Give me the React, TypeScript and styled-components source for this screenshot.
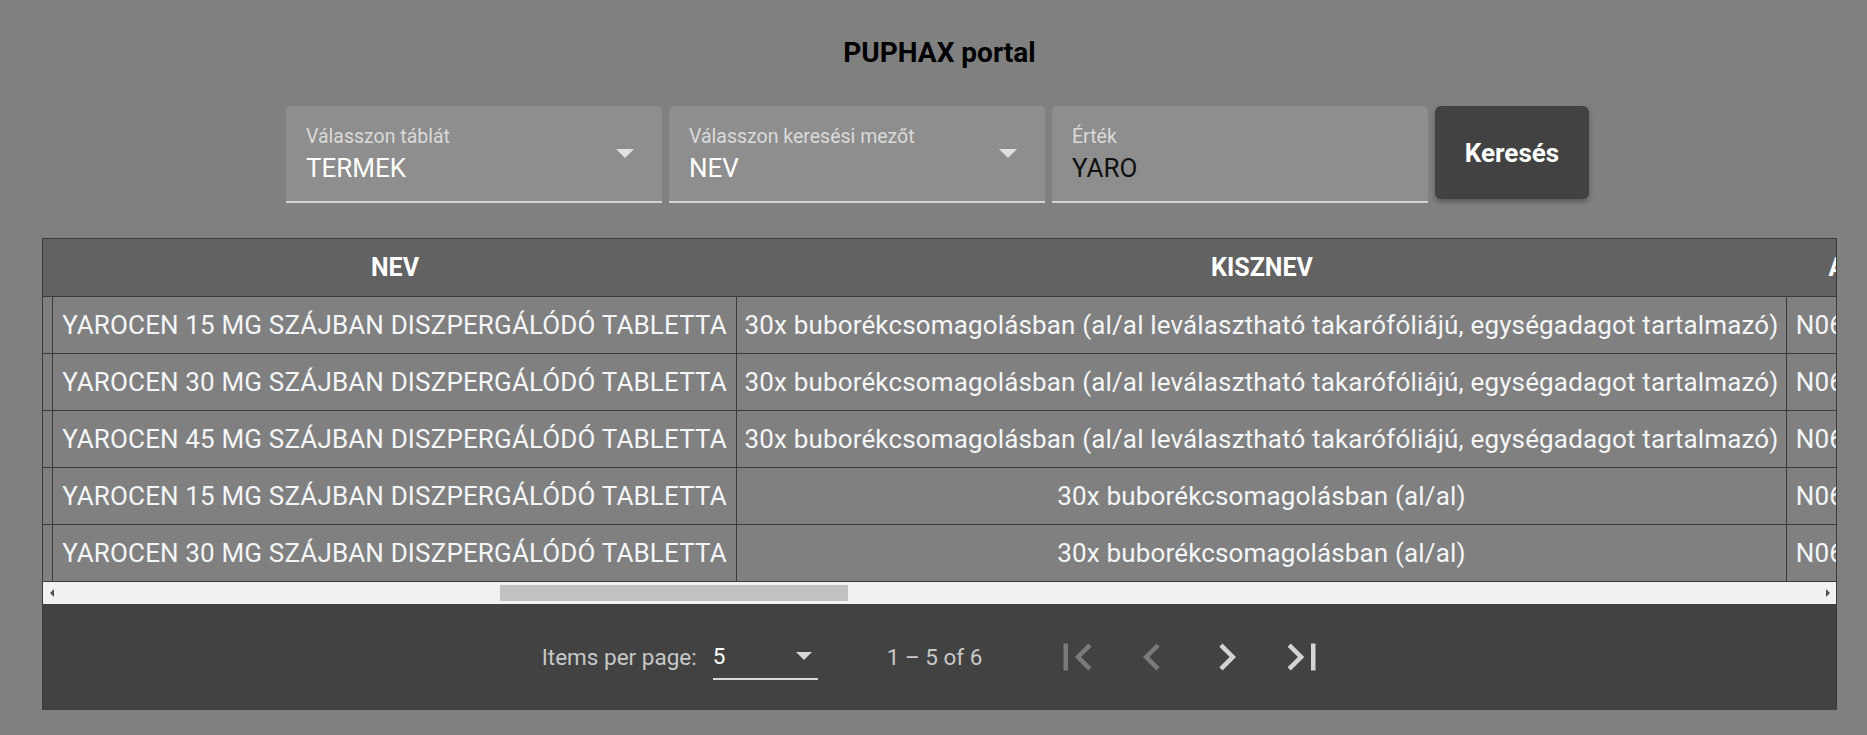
import React from "react";
import styled, { createGlobalStyle } from "styled-components";

const GlobalStyle = createGlobalStyle`
  html, body {
    margin: 0;
    padding: 0;
    background: #808080;
  }
  body {
    font-family: Roboto, "Noto Sans", "Liberation Sans", sans-serif;
  }
  * { box-sizing: border-box; }
`;

const Page = styled.div`
  width: 1795px;
  margin-left: 42px;
  min-height: 735px;
  display: flex;
  flex-direction: column;
  align-items: center;
`;

const Title = styled.h1`
  margin: 36px 0 0;
  font-size: 28px;
  line-height: 34px;
  font-weight: 700;
  color: #000;
`;

const SearchRow = styled.div`
  display: flex;
  gap: 7px;
  margin: 36px 4px 0 0;
  align-items: flex-start;
`;

const Field = styled.div`
  width: 376px;
  height: 97px;
  background: #8e8e8e;
  border-radius: 5px 5px 0 0;
  border-bottom: 2px solid #d2d2d2;
  padding: 19px 20px 0;
  display: grid;
  grid-template-columns: 1fr auto;
  align-items: start;
`;

const FieldText = styled.div`
  display: flex;
  flex-direction: column;
`;

const FieldLabel = styled.span`
  font-size: 19.5px;
  line-height: 23px;
  color: #dadada;
`;

const FieldValue = styled.span<{ $dark?: boolean }>`
  margin-top: 5px;
  font-size: 26px;
  line-height: 30px;
  color: ${(p) => (p.$dark ? "#111" : "#fff")};
`;

const SelectArrow = styled.span`
  align-self: center;
  margin: 0 8px 20px 0;
  width: 0;
  height: 0;
  border-left: 9px solid transparent;
  border-right: 9px solid transparent;
  border-top: 9px solid #e0e0e0;
`;

const SearchButton = styled.button`
  width: 154px;
  height: 93px;
  border: 0;
  border-radius: 6px;
  background: #424242;
  color: #fff;
  font-family: inherit;
  font-size: 26px;
  font-weight: 700;
  box-shadow: 0 3px 5px rgba(0, 0, 0, 0.3);
`;

const TableCard = styled.section`
  width: 100%;
  margin-top: 35px;
  border: 1px solid #3a3a3a;
  border-bottom: 0;
  display: flex;
  flex-direction: column;
`;

const Viewport = styled.div`
  overflow: hidden;
`;

const Grid = styled.div`
  display: grid;
  grid-template-columns: 10px 684px 1050px 130px;
  grid-template-rows: 58px repeat(5, 57px);
  width: 1874px;
`;

const HeadCell = styled.div`
  background: #626262;
  border-bottom: 1px solid #3a3a3a;
  color: #fff;
  font-size: 25px;
  font-weight: 700;
  display: flex;
  align-items: center;
  justify-content: center;
  white-space: nowrap;
  overflow: hidden;
  min-width: 0;
`;

const Cell = styled.div<{ $edge?: boolean }>`
  border-right: 1px solid #3a3a3a;
  border-bottom: 1px solid #3a3a3a;
  color: #f4f6f8;
  font-size: 26px;
  letter-spacing: 0.15px;
  display: flex;
  align-items: center;
  justify-content: center;
  padding: ${(p) => (p.$edge ? "0" : "0 8px")};
  white-space: nowrap;
  overflow: hidden;
  min-width: 0;
`;

const ScrollBar = styled.div`
  height: 22px;
  background: #f1f1f1;
  display: flex;
  align-items: center;
`;

const ScrollArrow = styled.span<{ $dir: "left" | "right" }>`
  width: 17px;
  height: 22px;
  display: flex;
  align-items: center;
  justify-content: center;
  &::before {
    content: "";
    width: 0;
    height: 0;
    border-top: 4px solid transparent;
    border-bottom: 4px solid transparent;
    ${(p) =>
      p.$dir === "left"
        ? "border-right: 4px solid #505050;"
        : "border-left: 4px solid #505050;"}
  }
`;

const ScrollTrack = styled.div`
  flex: 1;
  height: 100%;
  display: flex;
  align-items: center;
`;

const ScrollThumb = styled.div`
  height: 16px;
  background: #c1c1c1;
`;

const Paginator = styled.div`
  height: 106px;
  background: #424242;
  display: flex;
  align-items: center;
  justify-content: center;
  padding-left: 2px;
`;

const PagLabel = styled.span`
  font-size: 22.5px;
  color: #c8c8c8;
  margin-right: 16px;
`;

const PageSizeSelect = styled.div`
  width: 105px;
  height: 46px;
  border-bottom: 2px solid #d8d8d8;
  display: flex;
  align-items: center;
  justify-content: space-between;
  padding-right: 6px;
  font-size: 22.5px;
  color: #fff;
`;

const SmallArrow = styled.span`
  width: 0;
  height: 0;
  border-left: 8px solid transparent;
  border-right: 8px solid transparent;
  border-top: 8px solid #d8d8d8;
`;

const RangeLabel = styled.span`
  font-size: 22.5px;
  color: #c8c8c8;
  margin: 0 57px 0 69px;
`;

const NavButton = styled.button<{ $disabled?: boolean }>`
  width: 75px;
  height: 60px;
  border: 0;
  background: transparent;
  padding: 0;
  display: flex;
  align-items: center;
  justify-content: center;
  color: ${(p) => (p.$disabled ? "#7a7a7a" : "#d4d4d4")};
`;

const NavIcon = ({ d }: { d: string }) => (
  <svg width="54" height="54" viewBox="0 0 24 24" fill="currentColor">
    <path d={d} />
  </svg>
);

const ICONS = {
  first: "M18.41 16.59L13.82 12l4.59-4.59L17 6l-6 6 6 6zM6 6h2v12H6z",
  prev: "M15.41 7.41L14 6l-6 6 6 6 1.41-1.41L10.83 12z",
  next: "M10 6L8.59 7.41 13.17 12l-4.58 4.59L10 18l6-6z",
  last: "M5.59 7.41L10.18 12l-4.59 4.59L7 18l6-6-6-6zM16 6h2v12h-2z",
};

const LONG = "30x buborékcsomagolásban (al/al leválasztható takarófóliájú, egységadagot tartalmazó)";
const SHORT = "30x buborékcsomagolásban (al/al)";

const rows = [
  { nev: "YAROCEN 15 MG SZÁJBAN DISZPERGÁLÓDÓ TABLETTA", kisz: LONG, atc: "N06AX11" },
  { nev: "YAROCEN 30 MG SZÁJBAN DISZPERGÁLÓDÓ TABLETTA", kisz: LONG, atc: "N06AX11" },
  { nev: "YAROCEN 45 MG SZÁJBAN DISZPERGÁLÓDÓ TABLETTA", kisz: LONG, atc: "N06AX11" },
  { nev: "YAROCEN 15 MG SZÁJBAN DISZPERGÁLÓDÓ TABLETTA", kisz: SHORT, atc: "N06AX11" },
  { nev: "YAROCEN 30 MG SZÁJBAN DISZPERGÁLÓDÓ TABLETTA", kisz: SHORT, atc: "N06AX11" },
];

export default function App() {
  return (
    <>
      <GlobalStyle />
      <Page>
        <Title>PUPHAX portal</Title>
        <SearchRow>
          <Field>
            <FieldText>
              <FieldLabel>Válasszon táblát</FieldLabel>
              <FieldValue>TERMEK</FieldValue>
            </FieldText>
            <SelectArrow />
          </Field>
          <Field>
            <FieldText>
              <FieldLabel>Válasszon keresési mezőt</FieldLabel>
              <FieldValue>NEV</FieldValue>
            </FieldText>
            <SelectArrow />
          </Field>
          <Field>
            <FieldText>
              <FieldLabel>Érték</FieldLabel>
              <FieldValue $dark>YARO</FieldValue>
            </FieldText>
          </Field>
          <SearchButton>Keresés</SearchButton>
        </SearchRow>

        <TableCard>
          <Viewport>
            <Grid>
              <HeadCell />
              <HeadCell>NEV</HeadCell>
              <HeadCell>KISZNEV</HeadCell>
              <HeadCell>ATC</HeadCell>
              {rows.map((r, i) => (
                <React.Fragment key={i}>
                  <Cell $edge />
                  <Cell>{r.nev}</Cell>
                  <Cell>{r.kisz}</Cell>
                  <Cell>{r.atc}</Cell>
                </React.Fragment>
              ))}
            </Grid>
          </Viewport>
          <ScrollBar>
            <ScrollArrow $dir="left" />
            <ScrollTrack>
              <ScrollThumb style={{ marginLeft: 440, width: 348 }} />
            </ScrollTrack>
            <ScrollArrow $dir="right" />
          </ScrollBar>
          <Paginator>
            <PagLabel>Items per page:</PagLabel>
            <PageSizeSelect>
              <span>5</span>
              <SmallArrow />
            </PageSizeSelect>
            <RangeLabel>1 – 5 of 6</RangeLabel>
            <NavButton $disabled>
              <NavIcon d={ICONS.first} />
            </NavButton>
            <NavButton $disabled>
              <NavIcon d={ICONS.prev} />
            </NavButton>
            <NavButton>
              <NavIcon d={ICONS.next} />
            </NavButton>
            <NavButton>
              <NavIcon d={ICONS.last} />
            </NavButton>
          </Paginator>
        </TableCard>
      </Page>
    </>
  );
}
